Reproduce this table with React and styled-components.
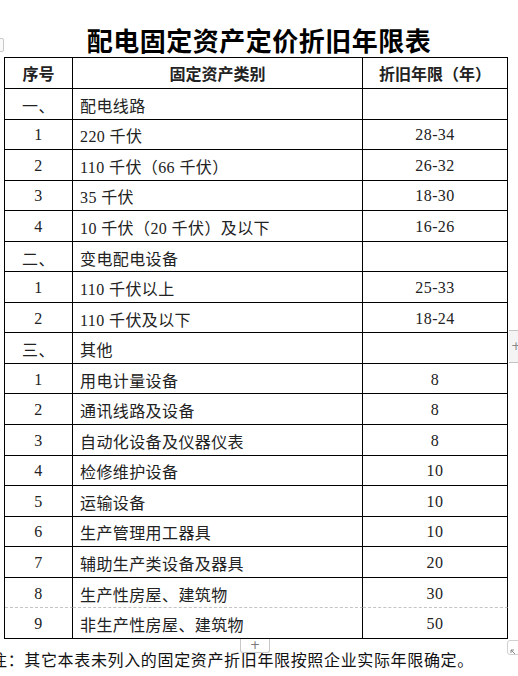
import React from 'react';
import styled, { createGlobalStyle } from 'styled-components';

const GlobalStyle = createGlobalStyle`
    html, body {
        margin: 0;
        padding: 0;
        background: #fff;
    }
    body {
        font-family: 'Liberation Serif', 'Noto Sans CJK SC', serif;
        color: #111;
        overflow: hidden;
    }
`;

const rows = [
    { no: '一、', name: '配电线路', years: '', group: true },
    { no: '1', name: '220 千伏', years: '28-34' },
    { no: '2', name: '110 千伏（66 千伏）', years: '26-32' },
    { no: '3', name: '35 千伏', years: '18-30' },
    { no: '4', name: '10 千伏（20 千伏）及以下', years: '16-26' },
    { no: '二、', name: '变电配电设备', years: '', group: true },
    { no: '1', name: '110 千伏以上', years: '25-33' },
    { no: '2', name: '110 千伏及以下', years: '18-24' },
    { no: '三、', name: '其他', years: '', group: true },
    { no: '1', name: '用电计量设备', years: '8' },
    { no: '2', name: '通讯线路及设备', years: '8' },
    { no: '3', name: '自动化设备及仪器仪表', years: '8' },
    { no: '4', name: '检修维护设备', years: '10' },
    { no: '5', name: '运输设备', years: '10' },
    { no: '6', name: '生产管理用工器具', years: '10' },
    { no: '7', name: '辅助生产类设备及器具', years: '20' },
    { no: '8', name: '生产性房屋、建筑物', years: '30', pageBreak: true },
    { no: '9', name: '非生产性房屋、建筑物', years: '50' },
];

function App() {
    return (
        <Page>
            <GlobalStyle />
            <LeftHandle />
            <Title>配电固定资产定价折旧年限表</Title>
            <Table>
                <colgroup>
                    <col style={{ width: 68 }} />
                    <col style={{ width: 290 }} />
                    <col style={{ width: 145 }} />
                </colgroup>
                <thead>
                    <Row $head>
                        <HeadCell>序号</HeadCell>
                        <HeadCell>固定资产类别</HeadCell>
                        <HeadCell>折旧年限（年）</HeadCell>
                    </Row>
                </thead>
                <tbody>
                    {rows.map((r, i) => (
                        <Row key={i}>
                            <Cell $align="center" $dashed={r.pageBreak}>
                                {r.no}
                            </Cell>
                            <Cell $dashed={r.pageBreak}>{r.name}</Cell>
                            <Cell $align="center" $dashed={r.pageBreak}>
                                {r.years}
                            </Cell>
                        </Row>
                    ))}
                </tbody>
            </Table>
            <Note>注：其它本表未列入的固定资产折旧年限按照企业实际年限确定。</Note>
            <SideAdd>+</SideAdd>
            <BottomAdd>+</BottomAdd>
            <ResizeHandle>
                <svg width="8" height="8" viewBox="0 0 8 8">
                    <path d="M1 1 L5 5 M1 1 L1 4 M1 1 L4 1" stroke="#888" strokeWidth="1" fill="none" />
                </svg>
            </ResizeHandle>
        </Page>
    );
}

export default App;

const Page = styled.div`
    position: relative;
    width: 518px;
    height: 676px;
    overflow: hidden;
`;

const Title = styled.h1`
    margin: 0;
    box-sizing: border-box;
    height: 57px;
    padding-top: 25px;
    line-height: 30px;
    text-align: center;
    font-family: 'Noto Sans CJK SC', sans-serif;
    font-weight: 700;
    font-size: 26px;
    letter-spacing: 0.5px;
    color: #000;
`;

const Table = styled.table`
    margin-left: 4px;
    width: 504px;
    table-layout: fixed;
    border-collapse: separate;
    border-spacing: 0;
    border-top: 1px solid #000;
    border-left: 1px solid #000;
`;

const Row = styled.tr`
    height: ${(p) => (p.$head ? '31px' : '30.55px')};
`;

const HeadCell = styled.th`
    padding: 0;
    border-right: 1px solid #000;
    border-bottom: 1px solid #000;
    text-align: center;
    vertical-align: middle;
    font-family: 'Noto Sans CJK SC', sans-serif;
    font-weight: 700;
    font-size: 16px;
    color: #222;
`;

const Cell = styled.td`
    padding: 2px 0 0 ${(p) => (p.$align === 'center' ? '0' : '7px')};
    border-right: 1px solid #000;
    border-bottom: ${(p) => (p.$dashed ? '1px dashed #c4c4c4' : '1px solid #000')};
    text-align: ${(p) => p.$align || 'left'};
    vertical-align: middle;
    font-size: 16px;
    color: #222;
    white-space: nowrap;
    letter-spacing: 0.4px;
`;

const Note = styled.p`
    margin: 9px 0 0;
    text-indent: -9px;
    line-height: 22px;
    font-family: 'Noto Sans CJK SC', sans-serif;
    font-size: 16px;
    letter-spacing: 0.65px;
    white-space: nowrap;
    color: #111;
`;

const LeftHandle = styled.div`
    position: absolute;
    left: -8px;
    top: 38px;
    width: 10px;
    height: 12px;
    border: 1px solid #c8c8c8;
    border-radius: 2px;
    background: #fafafa;
`;

const SideAdd = styled.div`
    position: absolute;
    left: 509px;
    top: 330px;
    width: 12px;
    height: 31px;
    border-top: 1px solid #c4c4c4;
    border-bottom: 1px solid #c4c4c4;
    background: #f4f4f4;
    color: #888;
    font-family: 'DejaVu Sans', sans-serif;
    font-size: 12px;
    line-height: 31px;
    padding-left: 2px;
`;

const BottomAdd = styled.div`
    position: absolute;
    left: 240px;
    top: 639px;
    width: 30px;
    height: 14px;
    box-sizing: border-box;
    border: 1px solid #c8c8c8;
    border-top: none;
    border-radius: 0 0 3px 3px;
    background: #fff;
    color: #777;
    text-align: center;
    font-family: 'DejaVu Sans', sans-serif;
    font-size: 12px;
    line-height: 12px;
`;

const ResizeHandle = styled.div`
    position: absolute;
    left: 507px;
    top: 640px;
    width: 14px;
    height: 15px;
    box-sizing: border-box;
    border: 1px solid #d0d0d0;
    border-radius: 3px;
    background: #fff;
    padding: 2px 0 0 2px;
`;
